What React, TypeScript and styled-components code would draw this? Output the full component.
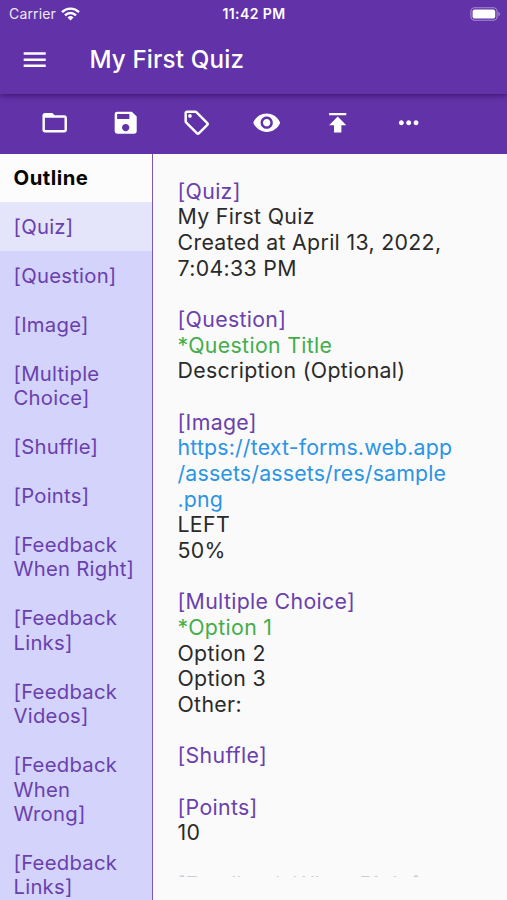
import React from 'react';
import styled, { createGlobalStyle } from 'styled-components';
import {
  MdMenu,
  MdFolderOpen,
  MdSave,
  MdOutlineLocalOffer,
  MdVisibility,
  MdPublish,
  MdMoreHoriz,
} from 'react-icons/md';

const PURPLE = '#6232a8';

const GlobalStyle = createGlobalStyle`
  *, *::before, *::after { box-sizing: border-box; }
  body {
    margin: 0;
    background: #fafafa;
    font-family: Inter, Roboto, sans-serif;
    -webkit-font-smoothing: antialiased;
  }
`;

const Screen = styled.div`
  display: flex;
  flex-direction: column;
  width: 507px;
  height: 900px;
  overflow: hidden;
  background: #fafafa;
`;

const Header = styled.header`
  flex: none;
  height: 94px;
  position: relative;
  z-index: 1;
  background: ${PURPLE};
  color: #fff;
  box-shadow: 0 2px 5px rgba(30, 0, 70, 0.5);
`;

const StatusBar = styled.div`
  display: grid;
  grid-template-columns: 1fr auto 1fr;
  align-items: center;
  height: 27px;
  padding: 0 6px 0 9px;
  font-size: 14px;
  line-height: 27px;
`;

const Carrier = styled.div`
  display: flex;
  align-items: center;
  gap: 5.5px;
  letter-spacing: 0.15px;
  color: #efe9f7;
`;

const Clock = styled.div`
  font-weight: 600;
  font-size: 14px;
  letter-spacing: 0.42px;
  margin-right: 2px;
`;

const BatterySlot = styled.div`
  display: flex;
  justify-content: flex-end;
`;

const TitleBar = styled.div`
  display: flex;
  align-items: center;
  gap: 39.6px;
  height: 66px;
  padding-left: 20.4px;
`;

const Title = styled.h1`
  margin: 0;
  font-size: 24.2px;
  line-height: 30px;
  font-weight: 500;
  letter-spacing: 0.15px;
`;

const Toolbar = styled.nav`
  flex: none;
  display: flex;
  height: 59.5px;
  padding: 0 0 1.5px 19px;
  background: ${PURPLE};
`;

const ToolButton = styled.button`
  display: flex;
  align-items: center;
  justify-content: center;
  width: 70.9px;
  padding: 0;
  border: 0;
  background: none;
  color: #fff;
`;

const Body = styled.div`
  flex: 1;
  min-height: 0;
  display: flex;
`;

const Sidebar = styled.aside`
  flex: none;
  width: 153px;
  border-right: 1.5px solid #7c55b8;
  background: #d3d3fc;
  overflow: hidden;
`;

const OutlineItem = styled.div<{ $kind?: 'heading' | 'active' }>`
  padding: 12.4px 0 12.1px 13.5px;
  font-size: 20.3px;
  line-height: 24.45px;
  letter-spacing: ${(p) => (p.$kind === 'heading' ? '0.5px' : '0.25px')};
  white-space: pre-line;
  font-weight: ${(p) => (p.$kind === 'heading' ? 700 : 400)};
  color: ${(p) => (p.$kind === 'heading' ? '#050505' : '#6a40ad')};
  background: ${(p) =>
    p.$kind === 'heading' ? '#fcfcfc' : p.$kind === 'active' ? '#e4e4fb' : 'transparent'};
`;

const Editor = styled.main`
  flex: 1;
  height: 723px;
  padding: 25px 0 0 24.5px;
  overflow: hidden;
`;

const tones = {
  tag: '#6a40ad',
  plain: '#2a2a2a',
  key: '#43ad4b',
  link: '#2b94e4',
  faint: '#cfcbd6',
};

type Tone = keyof typeof tones;

const Line = styled.div<{ $tone: Tone }>`
  min-height: 25.67px;
  font-size: 21.3px;
  line-height: 25.67px;
  letter-spacing: ${(p) => (p.$tone === 'link' ? '0.18px' : '0.33px')};
  white-space: pre;
  color: ${(p) => tones[p.$tone]};
`;

const tools = [
  { label: 'Open', Icon: MdFolderOpen },
  { label: 'Save', Icon: MdSave },
  { label: 'Tags', Icon: MdOutlineLocalOffer },
  { label: 'Preview', Icon: MdVisibility },
  { label: 'Publish', Icon: MdPublish },
  { label: 'More', Icon: MdMoreHoriz },
];

const outline = [
  '[Question]',
  '[Image]',
  '[Multiple\nChoice]',
  '[Shuffle]',
  '[Points]',
  '[Feedback\nWhen Right]',
  '[Feedback\nLinks]',
  '[Feedback\nVideos]',
  '[Feedback\nWhen\nWrong]',
  '[Feedback\nLinks]',
];

const lines: [Tone, string][] = [
  ['tag', '[Quiz]'],
  ['plain', 'My First Quiz'],
  ['plain', 'Created at April 13, 2022,'],
  ['plain', '7:04:33 PM'],
  ['plain', ''],
  ['tag', '[Question]'],
  ['key', '*Question Title'],
  ['plain', 'Description (Optional)'],
  ['plain', ''],
  ['tag', '[Image]'],
  ['link', 'https://text-forms.web.app'],
  ['link', '/assets/assets/res/sample'],
  ['link', '.png'],
  ['plain', 'LEFT'],
  ['plain', '50%'],
  ['plain', ''],
  ['tag', '[Multiple Choice]'],
  ['key', '*Option 1'],
  ['plain', 'Option 2'],
  ['plain', 'Option 3'],
  ['plain', 'Other:'],
  ['plain', ''],
  ['tag', '[Shuffle]'],
  ['plain', ''],
  ['tag', '[Points]'],
  ['plain', '10'],
  ['plain', ''],
  ['faint', '[Feedback When Right]'],
];

const WifiIcon = () => (
  <svg width="19" height="14" viewBox="0 0 19 14" fill="none" stroke="#fff" strokeWidth="2.4">
    <path d="M1 5.1A12.2 12.2 0 0 1 18 5.1" />
    <path d="M4 8.3A7.9 7.9 0 0 1 15 8.3" />
    <path d="M9.5 13.5 6.5 10.5A4.3 4.3 0 0 1 12.5 10.5Z" fill="#fff" stroke="none" />
  </svg>
);

const BatteryIcon = () => (
  <svg width="31" height="14" viewBox="0 0 31 14" fill="none">
    <rect x="0.9" y="0.7" width="26.2" height="12.6" rx="3.8" stroke="#fff" strokeOpacity="0.45" strokeWidth="1.1" />
    <rect x="2.6" y="2.4" width="22.6" height="9.2" rx="2.2" fill="#fff" />
    <path d="M28.5 4.8a2.5 2.5 0 0 1 0 4.4z" fill="#fff" fillOpacity="0.5" />
  </svg>
);

export default function App() {
  return (
    <>
      <GlobalStyle />
      <Screen>
        <Header>
          <StatusBar>
            <Carrier>
              Carrier
              <WifiIcon />
            </Carrier>
            <Clock>11:42 PM</Clock>
            <BatterySlot>
              <BatteryIcon />
            </BatterySlot>
          </StatusBar>
          <TitleBar>
            <MdMenu size={29.4} />
            <Title>My First Quiz</Title>
          </TitleBar>
        </Header>
        <Toolbar>
          {tools.map(({ label, Icon }) => (
            <ToolButton key={label} aria-label={label}>
              <Icon size={29.4} />
            </ToolButton>
          ))}
        </Toolbar>
        <Body>
          <Sidebar>
            <OutlineItem $kind="heading">Outline</OutlineItem>
            <OutlineItem $kind="active">[Quiz]</OutlineItem>
            {outline.map((text, i) => (
              <OutlineItem key={i}>{text}</OutlineItem>
            ))}
          </Sidebar>
          <Editor>
            {lines.map(([tone, text], i) => (
              <Line key={i} $tone={tone}>
                {text}
              </Line>
            ))}
          </Editor>
        </Body>
      </Screen>
    </>
  );
}
